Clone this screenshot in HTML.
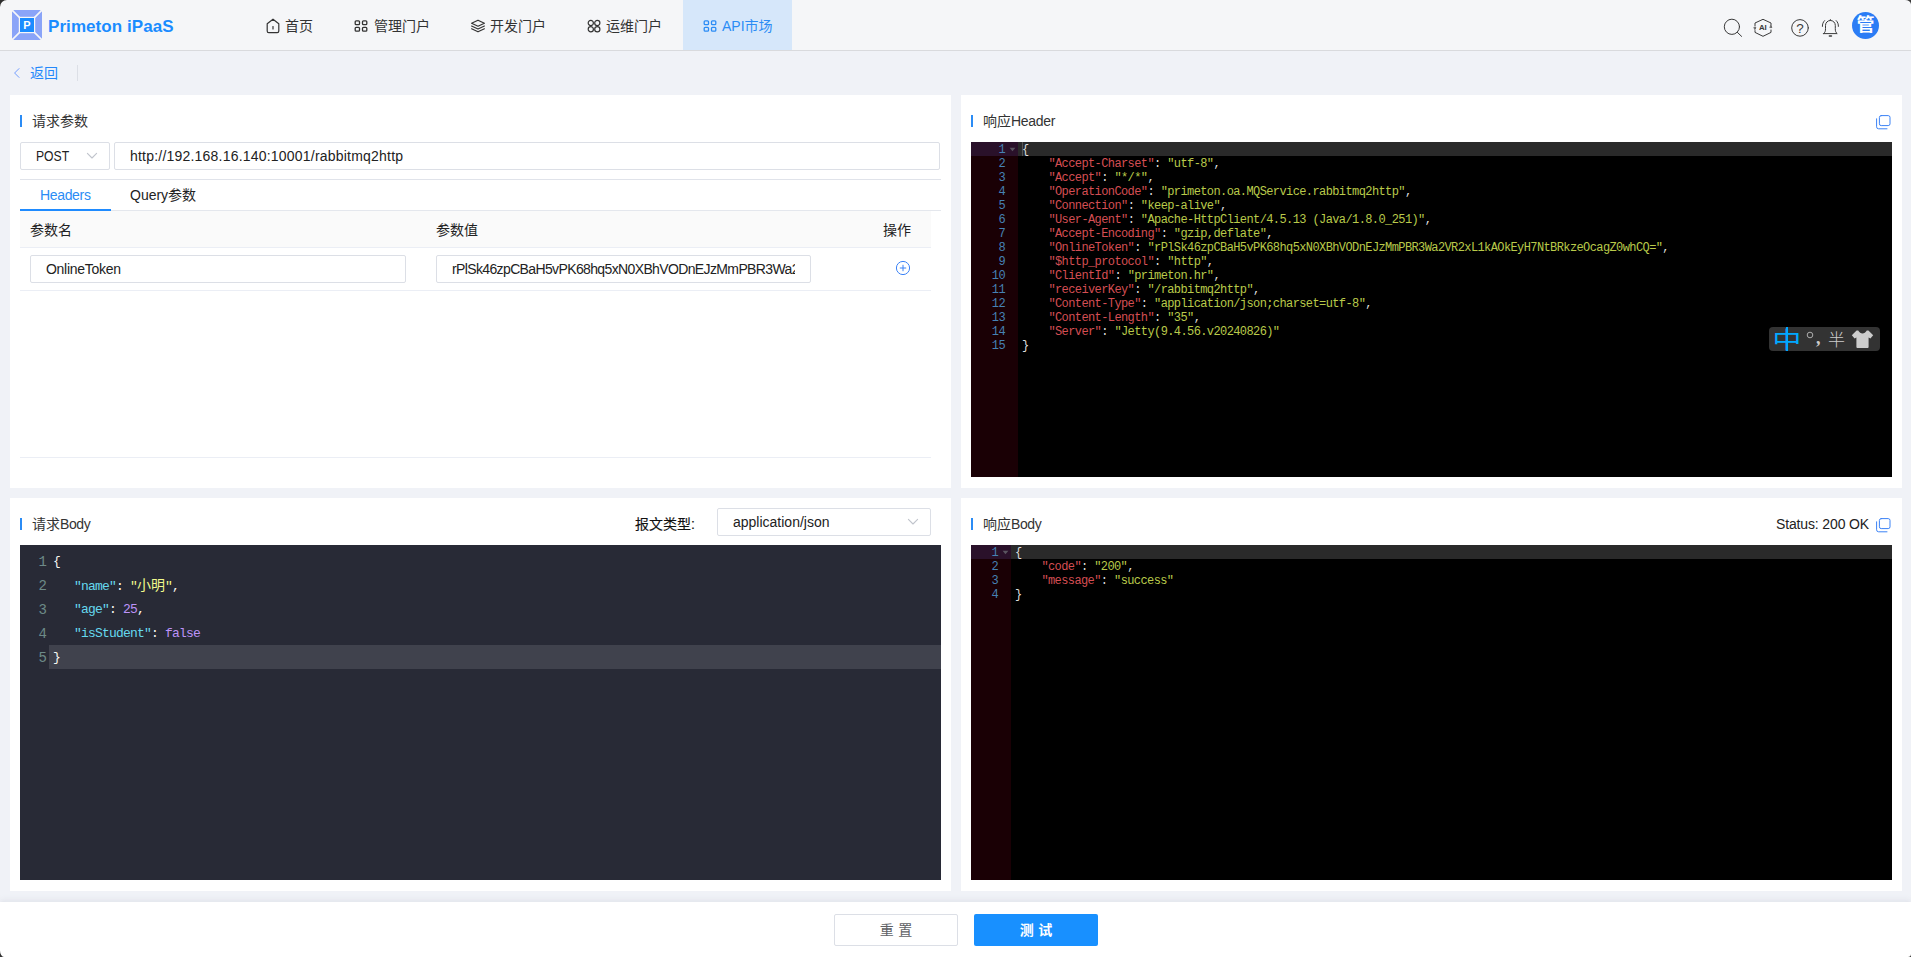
<!DOCTYPE html>
<html lang="zh-CN">
<head>
<meta charset="utf-8">
<title>Primeton iPaaS</title>
<style>
*{box-sizing:border-box;margin:0;padding:0}
html,body{width:1911px;height:957px;overflow:hidden}
body{position:relative;background:#f0f2f7;font-family:"Liberation Sans","Noto Sans CJK SC",sans-serif;font-size:14px;color:#333;line-height:1}
.abs{position:absolute}
.t{position:absolute;white-space:nowrap;line-height:20px;height:20px;color:#222}
/* nav */
#nav{position:absolute;left:0;top:0;width:1911px;height:51px;background:#f5f6f8;border-bottom:1px solid #d9dadd}
#nav .active{position:absolute;left:683px;top:0;width:109px;height:50px;background:#d6e7fa}
.navt{position:absolute;top:16px;line-height:20px;font-size:14px;color:#333;white-space:nowrap}
.brand{position:absolute;left:48px;top:15px;letter-spacing:.07px;font-size:17px;font-weight:bold;color:#1a8cff;line-height:24px;white-space:nowrap}
/* panels */
.panel{position:absolute;background:#fff}
.bar{position:absolute;width:2px;height:12px;background:#2b8cf5}
.title{position:absolute;font-size:14px;line-height:20px;color:#333;white-space:nowrap}
.inp{position:absolute;border:1px solid #dcdfe6;border-radius:2px;background:#fff}
.hl{position:absolute;height:1px;background:#e4e7ed}
/* editors */
.cm{position:absolute;background:#282a36;overflow:hidden}
.cm .ln{position:absolute;left:0;width:26px;text-align:right;color:#6d8a88;font-size:14px;letter-spacing:-1px}
.cm .row{position:absolute;left:0;right:0;height:24px;line-height:24px;font-family:"Liberation Mono","Noto Sans CJK SC",monospace;font-size:13px;color:#f8f8f2;white-space:pre}
.cm .code{position:absolute;left:33px;letter-spacing:-0.8px}
.k{color:#66d9ef}.s{color:#f1fa8c}.n{color:#bd93f9}
.ace{position:absolute;background:#000;overflow:hidden;font-family:"Liberation Mono",monospace;font-size:12px;letter-spacing:-0.6px;color:#dedede}
.ace .gut{position:absolute;left:0;top:0;bottom:0;background:#1a0005}
.ace .al{position:absolute;left:0;right:0;top:0;height:14px;background:#2a2a2a}
.ace .gal{position:absolute;left:0;top:0;height:14px;background:#2a112a}
.ace .r{position:absolute;left:0;right:0;height:14px;line-height:14px;white-space:pre;margin-top:1px}
.ace .num{position:absolute;left:0;text-align:right;color:#4682b4}
.ace .tx{position:absolute}
.v{color:#d54e53}.g{color:#b9ca4a}
</style>
</head>
<body>
<!-- NAV -->
<div id="nav">
  <div class="active"></div>
  <!-- logo -->
  <svg class="abs" style="left:12px;top:10px" width="30" height="30" viewBox="0 0 30 30">
    <rect x="0" y="0" width="30" height="30" rx="2.5" fill="#8aa4f8"/>
    <path d="M0 0L30 30M30 0L0 30" stroke="#f5f6f8" stroke-width="1.6"/>
    <rect x="6.8" y="6.8" width="16.4" height="16.4" fill="#f5f6f8"/>
    <rect x="8" y="8" width="14" height="14" fill="#1a8cff"/>
    <text x="15" y="19.2" font-family="Liberation Sans, sans-serif" font-weight="bold" font-size="11" fill="#fff" text-anchor="middle">P</text>
  </svg>
  <div class="brand">Primeton iPaaS</div>
  <!-- home -->
  <svg class="abs" style="left:266px;top:18px" width="14" height="16" viewBox="0 0 14 16" fill="none" stroke="#333" stroke-width="1.2" stroke-linejoin="round" stroke-linecap="round">
    <path d="M1.2 5.8L7 1.2L12.8 5.8V13a1.6 1.6 0 0 1-1.6 1.6H2.8A1.6 1.6 0 0 1 1.2 13Z"/>
    <path d="M7 8.6V11"/>
  </svg>
  <div class="navt" style="left:285px">首页</div>
  <!-- grid -->
  <svg class="abs" style="left:354px;top:19px" width="14" height="14" viewBox="0 0 14 14" fill="none" stroke="#333" stroke-width="1.3">
    <rect x="1.2" y="1.8" width="4.3" height="3.9" rx="1"/><rect x="8.5" y="1.8" width="4.3" height="3.9" rx="1"/>
    <rect x="1.2" y="8.3" width="4.3" height="3.9" rx="1"/><rect x="8.5" y="8.3" width="4.3" height="3.9" rx="1"/>
  </svg>
  <div class="navt" style="left:374px">管理门户</div>
  <!-- layers -->
  <svg class="abs" style="left:470px;top:19px" width="16" height="14" viewBox="0 0 16 14" fill="none" stroke="#333" stroke-width="1.2" stroke-linejoin="round" stroke-linecap="round">
    <path d="M8 1.2L14.4 4.2L8 7.2L1.6 4.2Z"/>
    <path d="M1.6 7L8 10L14.4 7"/>
    <path d="M1.6 9.8L8 12.8L14.4 9.8"/>
  </svg>
  <div class="navt" style="left:490px">开发门户</div>
  <!-- clover -->
  <svg class="abs" style="left:587px;top:19px" width="14" height="14" viewBox="0 0 14 14" fill="none" stroke="#333" stroke-width="1.2">
    <circle cx="3.8" cy="3.9" r="2.6"/><circle cx="10.3" cy="3.9" r="2.6"/>
    <circle cx="3.8" cy="10.2" r="2.6"/><circle cx="10.3" cy="10.2" r="2.6"/>
  </svg>
  <div class="navt" style="left:606px">运维门户</div>
  <!-- api -->
  <svg class="abs" style="left:703px;top:19px" width="14" height="14" viewBox="0 0 14 14" fill="none" stroke="#2b8cf5" stroke-width="1.3">
    <rect x="1.2" y="1.8" width="4.3" height="3.9" rx="1"/><rect x="8.5" y="1.8" width="4.3" height="3.9" rx="1"/>
    <rect x="1.2" y="8.3" width="4.3" height="3.9" rx="1"/><rect x="8.5" y="8.3" width="4.3" height="3.9" rx="1"/>
  </svg>
  <div class="navt" style="left:722px;color:#2b8cf5">API市场</div>
  <!-- right icons -->
  <svg class="abs" style="left:1700px;top:0" width="160" height="50" viewBox="0 0 160 50" fill="none" stroke="#3a3a3a" stroke-width="1" stroke-linecap="round" stroke-linejoin="round">
    <circle cx="31.9" cy="26.8" r="7.6"/><path d="M37.4 32.4L41.6 36.4"/>
    <path d="M55 26V23L63 19.3L71 23V25.2M71 30V32.4L63 36.3L55 32.4V30.6"/>
    <path d="M54.1 27.4H55.9L55 29.4Z" fill="#3a3a3a" stroke-width=".5"/>
    <path d="M70.1 27.6H71.9L71 25.6Z" fill="#3a3a3a" stroke-width=".5"/>
    <text x="62.9" y="30.2" font-family="Liberation Sans, sans-serif" font-weight="bold" font-size="7.8" fill="#3a3a3a" stroke="none" text-anchor="middle">AI</text>
    <circle cx="100" cy="27.9" r="8.3"/>
    <text x="100" y="33" font-family="Liberation Sans, sans-serif" font-size="13.5" fill="#3a3a3a" stroke="none" text-anchor="middle">?</text>
    <path d="M123.6 33.6H137.2C135.6 32.4 135.3 31 135.3 28.6V25.4a4.9 4.9 0 0 0-9.8 0V28.6C125.5 31 125.2 32.4 123.6 33.6Z"/>
    <path d="M130.4 20.4V19.6"/><path d="M129.4 36h2" stroke-width="1.6"/>
    <path d="M124.6 20.6C123 22.2 122.3 24.2 122.4 26.4"/><path d="M136.2 20.6c1.6 1.6 2.3 3.6 2.2 5.8"/>
  </svg>
  <div class="abs" style="left:1852px;top:12px;width:27px;height:27px;border-radius:50%;background:#2b7cf5;color:#fff;font-size:18px;font-weight:bold;line-height:26px;text-align:center">管</div>
</div>
<!-- back -->
<svg class="abs" style="left:12px;top:66px" width="10" height="14" viewBox="0 0 10 14" fill="none" stroke="#5b8dff" stroke-width=".85" stroke-linecap="round" stroke-linejoin="round"><path d="M7 2.6L2.6 7L7 11.4"/></svg>
<div class="t" style="left:30px;top:63px;color:#2488fb">返回</div>
<div class="abs" style="left:77px;top:65px;width:1px;height:16px;background:#dcdfe6"></div>
<!-- PANELS -->
<div class="panel" id="p1" style="left:10px;top:95px;width:941px;height:393px">
  <div class="bar" style="left:10px;top:20px"></div>
  <div class="title" style="left:22px;top:16px">请求参数</div>
  <div class="inp" style="left:10px;top:47px;width:90px;height:28px"></div>
  <div class="t" style="left:26px;top:51px;transform:scaleX(.87);transform-origin:0 0">POST</div>
  <svg class="abs" style="left:76px;top:57px" width="12" height="8" viewBox="0 0 12 8" fill="none" stroke="#c0c4cc" stroke-width="1.1" stroke-linecap="round" stroke-linejoin="round"><path d="M1.4 1.4L6 6L10.6 1.4"/></svg>
  <div class="inp" style="left:104px;top:47px;width:826px;height:28px"></div>
  <div class="t" style="left:120px;top:51px;letter-spacing:.21px">http://192.168.16.140:10001/rabbitmq2http</div>
  <div class="hl" style="left:10px;top:84px;width:921px;background:#e0e3ea"></div>
  <div class="t" style="left:30px;top:90px;color:#2b8cf5;letter-spacing:-.34px">Headers</div>
  <div class="t" style="left:120px;top:90px">Query参数</div>
  <div class="hl" style="left:10px;top:115px;width:921px;background:#e4e7ed"></div>
  <div class="abs" style="left:10px;top:114px;width:91px;height:2px;background:#1f8bff"></div>
  <div class="abs" style="left:10px;top:116px;width:911px;height:36px;background:#fafafa"></div>
  <div class="t" style="left:20px;top:125px">参数名</div>
  <div class="t" style="left:426px;top:125px">参数值</div>
  <div class="t" style="left:873px;top:125px">操作</div>
  <div class="hl" style="left:10px;top:152px;width:911px;background:#ebeef5"></div>
  <div class="inp" style="left:20px;top:160px;width:376px;height:28px"></div>
  <div class="t" style="left:36px;top:164px;letter-spacing:-.29px">OnlineToken</div>
  <div class="inp" style="left:426px;top:160px;width:375px;height:28px"></div>
  <div class="t" style="left:442px;top:164px;width:343px;overflow:hidden;letter-spacing:-.63px">rPlSk46zpCBaH5vPK68hq5xN0XBhVODnEJzMmPBR3Wa2VR2xL1kAOkEyH7NtBRkzeOcagZ0whCQ=</div>
  <svg class="abs" style="left:885px;top:165px" width="16" height="16" viewBox="0 0 16 16" fill="none" stroke="#3b82f6" stroke-width="1"><circle cx="8" cy="8" r="6.6"/><path d="M8 5.2V10.8M5.2 8H10.8" stroke-linecap="round"/></svg>
  <div class="hl" style="left:10px;top:195px;width:911px;background:#ebeef5"></div>
  <div class="hl" style="left:10px;top:362px;width:911px;background:#ebeef5"></div>
</div>
<div class="panel" id="p2" style="left:10px;top:498px;width:941px;height:393px">
  <div class="bar" style="left:10px;top:20px"></div>
  <div class="title" style="left:22px;top:16px">请求<span style="letter-spacing:-.4px">Body</span></div>
  <div class="t" style="left:625px;top:16px;color:#111;-webkit-text-stroke:.15px #111">报文类型:</div>
  <div class="inp" style="left:707px;top:10px;width:214px;height:28px"></div>
  <div class="t" style="left:723px;top:14px">application/json</div>
  <svg class="abs" style="left:897px;top:20px" width="12" height="8" viewBox="0 0 12 8" fill="none" stroke="#c0c4cc" stroke-width="1.1" stroke-linecap="round" stroke-linejoin="round"><path d="M1.4 1.4L6 6L10.6 1.4"/></svg>
  <div class="cm" style="left:10px;top:47px;width:921px;height:335px">
    <div class="abs" style="left:29px;right:0;top:100px;height:24px;background:#40424d"></div>
    <div class="row" style="top:5px"><span class="ln">1</span><span class="code">{</span></div>
    <div class="row" style="top:29px"><span class="ln">2</span><span class="code">   <span class="k">"name"</span>: <span class="s">"<span style="letter-spacing:0;font-size:14px">小明</span>"</span>,</span></div>
    <div class="row" style="top:53px"><span class="ln">3</span><span class="code">   <span class="k">"age"</span>: <span class="n">25</span>,</span></div>
    <div class="row" style="top:77px"><span class="ln">4</span><span class="code">   <span class="k">"isStudent"</span>: <span class="n">false</span></span></div>
    <div class="row" style="top:101px"><span class="ln">5</span><span class="code">}</span></div>
  </div>
</div>
<div class="panel" id="p3" style="left:961px;top:95px;width:941px;height:393px">
  <div class="bar" style="left:10px;top:20px"></div>
  <div class="title" style="left:22px;top:16px">响应<span style="letter-spacing:-.3px">Header</span></div>
  <svg class="abs" style="left:915px;top:19.6px" width="15" height="15" viewBox="0 0 15 15" fill="none" stroke="#3b82f6" stroke-width="1" stroke-linejoin="round" stroke-linecap="round"><rect x="3.4" y="0.6" width="10.6" height="10" rx="1.8"/><path d="M0.6 3.8V11.8a2 2 0 0 0 2 2H11"/></svg>
  <div class="ace" style="left:10px;top:47px;width:921px;height:335px">
    <div class="gut" style="width:47px"></div>
    <div class="al" style="left:47px"></div>
    <div class="gal" style="width:47px"></div>
    <div class="abs" style="left:51px;top:0;width:1px;height:14px;background:#555"></div>
    <svg class="abs" style="left:38px;top:5px" width="7" height="5" viewBox="0 0 7 5"><path d="M0.6 0.8H6.4L3.5 4.2Z" fill="#5a5560"/></svg>
    <div class="r" style="top:0px"><span class="num" style="width:34px">1</span><span class="tx" style="left:51px">{</span></div>
    <div class="r" style="top:14px"><span class="num" style="width:34px">2</span><span class="tx" style="left:51px">    <span class="v">"Accept-Charset"</span>: <span class="g">"utf-8"</span>,</span></div>
    <div class="r" style="top:28px"><span class="num" style="width:34px">3</span><span class="tx" style="left:51px">    <span class="v">"Accept"</span>: <span class="g">"*/*"</span>,</span></div>
    <div class="r" style="top:42px"><span class="num" style="width:34px">4</span><span class="tx" style="left:51px">    <span class="v">"OperationCode"</span>: <span class="g">"primeton.oa.MQService.rabbitmq2http"</span>,</span></div>
    <div class="r" style="top:56px"><span class="num" style="width:34px">5</span><span class="tx" style="left:51px">    <span class="v">"Connection"</span>: <span class="g">"keep-alive"</span>,</span></div>
    <div class="r" style="top:70px"><span class="num" style="width:34px">6</span><span class="tx" style="left:51px">    <span class="v">"User-Agent"</span>: <span class="g">"Apache-HttpClient/4.5.13 (Java/1.8.0_251)"</span>,</span></div>
    <div class="r" style="top:84px"><span class="num" style="width:34px">7</span><span class="tx" style="left:51px">    <span class="v">"Accept-Encoding"</span>: <span class="g">"gzip,deflate"</span>,</span></div>
    <div class="r" style="top:98px"><span class="num" style="width:34px">8</span><span class="tx" style="left:51px">    <span class="v">"OnlineToken"</span>: <span class="g">"rPlSk46zpCBaH5vPK68hq5xN0XBhVODnEJzMmPBR3Wa2VR2xL1kAOkEyH7NtBRkzeOcagZ0whCQ="</span>,</span></div>
    <div class="r" style="top:112px"><span class="num" style="width:34px">9</span><span class="tx" style="left:51px">    <span class="v">"$http_protocol"</span>: <span class="g">"http"</span>,</span></div>
    <div class="r" style="top:126px"><span class="num" style="width:34px">10</span><span class="tx" style="left:51px">    <span class="v">"ClientId"</span>: <span class="g">"primeton.hr"</span>,</span></div>
    <div class="r" style="top:140px"><span class="num" style="width:34px">11</span><span class="tx" style="left:51px">    <span class="v">"receiverKey"</span>: <span class="g">"/rabbitmq2http"</span>,</span></div>
    <div class="r" style="top:154px"><span class="num" style="width:34px">12</span><span class="tx" style="left:51px">    <span class="v">"Content-Type"</span>: <span class="g">"application/json;charset=utf-8"</span>,</span></div>
    <div class="r" style="top:168px"><span class="num" style="width:34px">13</span><span class="tx" style="left:51px">    <span class="v">"Content-Length"</span>: <span class="g">"35"</span>,</span></div>
    <div class="r" style="top:182px"><span class="num" style="width:34px">14</span><span class="tx" style="left:51px">    <span class="v">"Server"</span>: <span class="g">"Jetty(9.4.56.v20240826)"</span></span></div>
    <div class="r" style="top:196px"><span class="num" style="width:34px">15</span><span class="tx" style="left:51px">}</span></div>
  </div>
</div>
<div class="panel" id="p4" style="left:961px;top:498px;width:941px;height:393px">
  <div class="bar" style="left:10px;top:20px"></div>
  <div class="title" style="left:22px;top:16px">响应<span style="letter-spacing:-.4px">Body</span></div>
  <div class="t" style="left:815px;top:16px;letter-spacing:-.14px">Status: 200 OK</div>
  <svg class="abs" style="left:915px;top:19.6px" width="15" height="15" viewBox="0 0 15 15" fill="none" stroke="#3b82f6" stroke-width="1" stroke-linejoin="round" stroke-linecap="round"><rect x="3.4" y="0.6" width="10.6" height="10" rx="1.8"/><path d="M0.6 3.8V11.8a2 2 0 0 0 2 2H11"/></svg>
  <div class="ace" style="left:10px;top:47px;width:921px;height:335px">
    <div class="gut" style="width:40px"></div>
    <div class="al" style="left:40px"></div>
    <div class="gal" style="width:40px"></div>
    <svg class="abs" style="left:31px;top:5px" width="7" height="5" viewBox="0 0 7 5"><path d="M0.6 0.8H6.4L3.5 4.2Z" fill="#5a5560"/></svg>
    <div class="r" style="top:0px"><span class="num" style="width:27px">1</span><span class="tx" style="left:44px">{</span></div>
    <div class="r" style="top:14px"><span class="num" style="width:27px">2</span><span class="tx" style="left:44px">    <span class="v">"code"</span>: <span class="g">"200"</span>,</span></div>
    <div class="r" style="top:28px"><span class="num" style="width:27px">3</span><span class="tx" style="left:44px">    <span class="v">"message"</span>: <span class="g">"success"</span></span></div>
    <div class="r" style="top:42px"><span class="num" style="width:27px">4</span><span class="tx" style="left:44px">}</span></div>
  </div>
</div>
<!-- IME toolbar -->
<div class="abs" id="ime" style="left:1769px;top:327px;width:111px;height:24px;background:#333;border-radius:4px;overflow:hidden;color:#ccc">
  <div class="abs" id="zh" style="left:6.4px;top:-5px;width:24px;height:36px;font-size:24px;line-height:36px;text-align:center;color:#00a8ff;transform:scale(1.2,.97);transform-origin:50% 50%">中</div>
  <div class="abs" style="left:17px;top:0;width:2px;height:24px;background:#00a8ff"></div>
  <div class="abs" style="left:37px;top:4px;width:8px;height:8px;border:1.4px solid #ccc;border-radius:50%;transform:scale(.8)"></div>
  <div class="abs" style="left:47px;top:.5px;font-size:18px;line-height:20px;font-family:'Liberation Serif',serif;font-weight:bold;color:#ccc">,</div>
  <div class="abs" style="left:59px;top:3.5px;font-size:17px;line-height:20px;color:#ccc;font-weight:300">半</div>
  <svg class="abs" style="left:82px;top:3px" width="23" height="19" viewBox="0 0 23 19"><path d="M7.2 0.6C8.4 2.6 9.8 3.4 11.5 3.4C13.2 3.4 14.6 2.6 15.8 0.6L17.4 0.4L22.2 5.2L19.4 8.6L17.6 7.6V17a1 1 0 0 1-1 1H6.4a1 1 0 0 1-1-1V7.6L3.6 8.6L0.8 5.2L5.6 0.4Z" fill="#ccc"/></svg>
</div>
<!-- FOOTER -->
<div id="footer" class="abs" style="left:0;top:902px;width:1911px;height:55px;background:#fff;box-shadow:0 -2px 5px rgba(195,200,212,.32)">
  <div class="abs" style="left:834px;top:12px;width:124px;height:32px;border:1px solid #dcdfe6;border-radius:2px;background:#fff;color:#606266;font-size:14px;line-height:30px;text-align:center;letter-spacing:4.5px;text-indent:4.5px">重置</div>
  <div class="abs" style="left:974px;top:12px;width:124px;height:32px;border-radius:2px;background:#1890ff;color:#fff;font-size:14px;font-weight:bold;line-height:32px;text-align:center;letter-spacing:4.5px;text-indent:4.5px">测试</div>
</div>
<svg class="abs" style="left:0;top:0" width="8" height="8" viewBox="0 0 8 8"><path d="M0 0H7A7 7 0 0 0 0 7Z" fill="#2e2e2e"/></svg>
<svg class="abs" style="left:1903px;top:0" width="8" height="8" viewBox="0 0 8 8"><path d="M8 0H2A6 4.5 0 0 1 8 4.5Z" fill="#3a3a3a"/></svg>
<svg class="abs" style="left:0;top:949px" width="8" height="8" viewBox="0 0 8 8"><path d="M0 8H4A4 6.5 0 0 1 0 1.5Z" fill="#333"/></svg>
<svg class="abs" style="left:1903px;top:949px" width="8" height="8" viewBox="0 0 8 8"><path d="M8 8H5A3 3 0 0 0 8 5Z" fill="#333"/></svg>
</body>
</html>
